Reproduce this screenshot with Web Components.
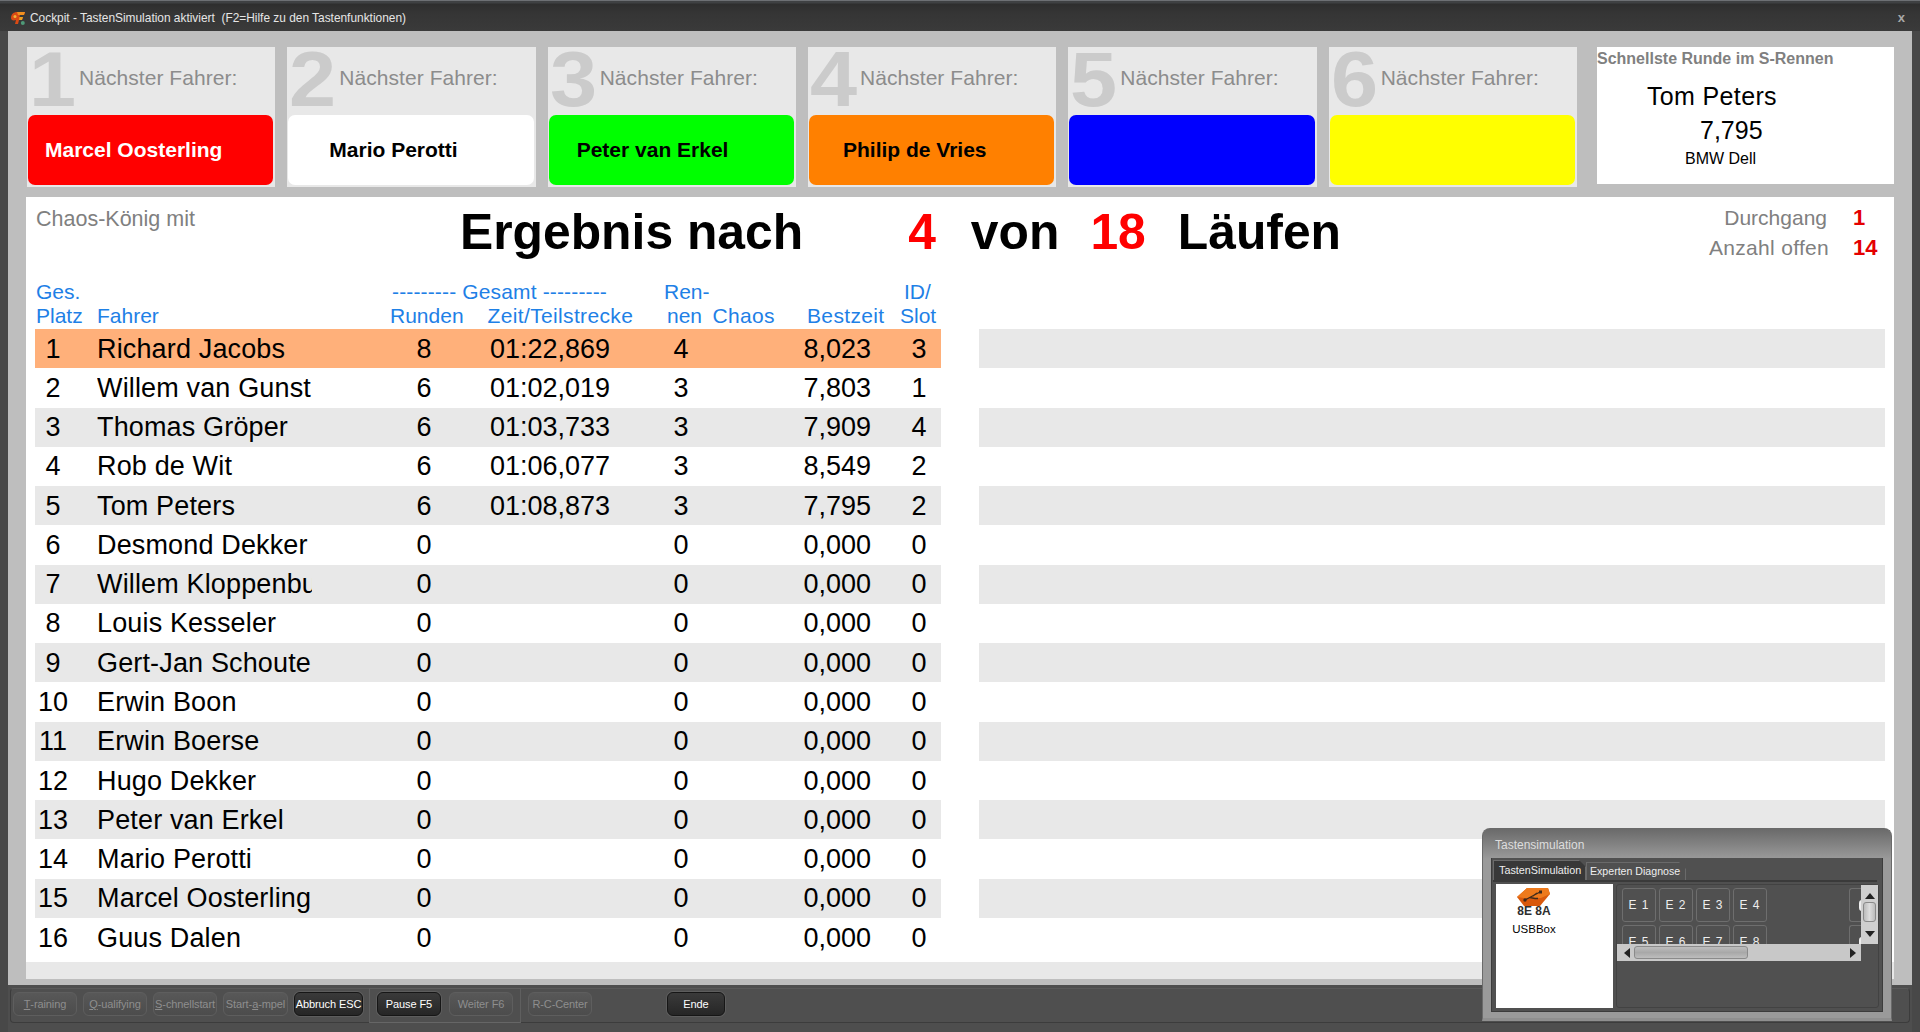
<!DOCTYPE html>
<html lang="de"><head><meta charset="utf-8"><title>Cockpit</title>
<style>
html,body{margin:0;height:100%;overflow:hidden;background:#3c3c3c;font-family:"Liberation Sans",Arial,sans-serif}
</style></head><body>
<app-window></app-window>
<script>
const el=(name,css,html)=>{customElements.define(name,class extends HTMLElement{
  connectedCallback(){ if(this.shadowRoot)return; const s=this.attachShadow({mode:'open'});
    const a=n=>this.getAttribute(n)||''; s.innerHTML='<style>'+css+'</style>'+html(a,this);}
});};

el('title-bar',`:host{display:flex;align-items:center;height:31px;box-sizing:border-box;flex:none;padding:3px 14px 0 10px;
  background:linear-gradient(#3f4143 0,#3f4143 2px,#2e2e2e 3px,#353535 12px,#3a3a3a 100%);border-top:1px solid #6d7074;color:#e6e6e6;font-size:11.9px}
 svg{width:16px;height:16px;margin-right:4px;flex:none}
 span{flex:1;white-space:pre}
 b{font-weight:700;color:#a8a8a8;font-size:13px;margin-right:1px}`,
 ()=>`<svg viewBox="0 0 16 16"><path d="M1 8C1 4 4 2 7 2H15L14 5H10L9.5 7H13L12 10H9L8 14H5L6 10C3 11 1 10 1 8Z" fill="#d94a14"/><path d="M7 2H15L14 5H8Z" fill="#ef8f1f"/><circle cx="5" cy="6.5" r="1.5" fill="#f2b33a"/><path d="M9.5 7H13L12 10H9Z" fill="#e9a020"/><circle cx="12.8" cy="13" r="2" fill="#4e9a78"/></svg><span>Cockpit - TastenSimulation aktiviert  (F2=Hilfe zu den Tastenfunktionen)</span><b>x</b>`);

el('driver-card',`:host{display:flex;flex-direction:column;flex:1 1 0;min-width:0;background:#e8e8e8;padding:0 2px 2px 1px;box-sizing:border-box}
 .top{display:flex;align-items:center;height:68px;flex:none}
 .n{width:49px;flex:none;margin-left:1px;font:700 77px/68px "Liberation Sans",sans-serif;color:#cbcbcb;white-space:nowrap;position:relative;top:-2px;transform:scaleX(1.1);transform-origin:0 50%}
 .l{font-size:21px;color:#8c8c8c;white-space:nowrap;margin-left:1px;position:relative;top:-3px;letter-spacing:.05px}
 .name{flex:1;border-radius:7px;background:var(--c,#fff);color:var(--t,#000);font:700 21px/1 "Liberation Sans",sans-serif;display:flex;align-items:center;white-space:nowrap;padding-bottom:2px;box-sizing:border-box}`,
 (a)=>`<div class="top"><span class="n">${a('num')}</span><span class="l">Nächster Fahrer:</span></div>
 <div class="name" style="--c:${a('bg')};--t:${a('fg')||'#000'};padding-left:${a('pad')||0}px"><slot></slot></div>`);

el('best-lap',`:host{display:flex;flex-direction:column;width:297px;flex:none;background:#fff;height:137px;margin:0 0 0 8px;box-sizing:border-box;color:#000}
 .h{font:700 16px/20px "Liberation Sans",sans-serif;color:#808080;margin-top:2px;white-space:nowrap}
 .a{font-size:25px;line-height:30px;margin:12px 0 0 50px;letter-spacing:.35px}
 .b{font-size:25px;line-height:30px;margin:4px 0 0 103px}
 .c{font-size:16px;line-height:20px;margin:4px 0 0 88px}`,
 ()=>`<div class="h">Schnellste Runde im S-Rennen</div><div class="a">Tom Peters</div><div class="b">7,795</div><div class="c">BMW Dell</div>`);

el('result-head',`:host{display:flex;height:83px;flex:none;box-sizing:border-box;white-space:nowrap}
 .chaos{width:434px;flex:none;box-sizing:border-box;padding:9px 0 0 10px;font-size:21.5px;line-height:26px;color:#808080}
 .t{display:flex;flex:none;height:72px;align-items:center;font:700 49.8px/1 "Liberation Sans",sans-serif;color:#000}
 .t .r{color:#f00}
 .info{margin-left:auto;display:grid;grid-template-columns:auto 24px 26px;grid-auto-rows:30px;padding:6px 15px 0 0;font-size:21px;color:#808080;height:60px;align-items:center;text-align:right}
 .info b{grid-column:3;color:#e40000;font-size:22px;text-align:left;font-weight:700}
 .info span.d{margin-right:2px}.info span.o{letter-spacing:.3px}`,
 ()=>`<div class="chaos">Chaos-König mit</div>
 <div class="t"><span>Ergebnis nach</span><span class="r" style="margin-left:105px">4</span><span style="margin-left:35px">von</span><span class="r" style="margin-left:31px">18</span><span style="margin-left:32px">Läufen</span></div>
 <div class="info"><span class="d">Durchgang</span><b>1</b><span class="o">Anzahl offen</span><b>14</b></div>`);

el('table-head',`:host{display:grid;grid-template-columns:61px 293px 274px 48.5px 94.5px 93px 1fr;grid-template-rows:24px 24px;padding-left:1px;height:49px;box-sizing:border-box;font-size:21px;line-height:24px;color:#1e80e6;white-space:nowrap;flex:none}
 div{display:flex;flex-direction:column}
 .s{margin-left:2px;letter-spacing:.15px}.x{display:flex;flex-direction:row;gap:24px}
 .i{padding-left:3px}.w{letter-spacing:.35px}`,
 ()=>`<div style="grid-row:1/3"><span>Ges.</span><span>Platz</span></div>
 <div style="grid-row:1/3"><span>&nbsp;</span><span>Fahrer</span></div>
 <div style="grid-row:1/3"><span class="s">--------- Gesamt ---------</span><span class="x"><span>Runden</span><span class="w">Zeit/Teilstrecke</span></span></div>
 <div style="grid-row:1/3"><span>Ren-</span><span class="i">nen</span></div>
 <div style="grid-row:1/3"><span>&nbsp;</span><span class="w">Chaos</span></div>
 <div style="grid-row:1/3"><span>&nbsp;</span><span class="w">Bestzeit</span></div>
 <div style="grid-row:1/3"><span style="padding-left:4px">ID/</span><span>Slot</span></div>`);

el('result-row',`:host{display:grid;grid-template-columns:63px 214px 62px 100px 152px 110px 54px 81px 26px 44px;height:39.27px;align-items:center;font-size:27px;color:#000;white-space:nowrap;background:#fff}
 :host([shade]){background:#e8e8e8}:host([lead]){background:#ffb07a}
 span{text-align:center;line-height:31px;margin-top:1px}
 .p{padding-right:27px}
 .n{text-align:left;overflow:hidden;margin-left:-1px;width:215px;letter-spacing:.15px}.v{text-align:right}`,
 (a)=>`<span class="p">${a('p')}</span><span class="n">${a('n')}</span><i></i><span>${a('r')}</span><span>${a('z')}</span><span>${a('m')}</span><i></i><span class="v">${a('b')}</span><i></i><span>${a('i')}</span>`);

el('strip-row',`:host{display:block;height:39.27px;background:#fff}:host([shade]){background:#e8e8e8}`,()=>``);

const rows=[["1","Richard Jacobs","8","01:22,869","4","8,023","3"],["2","Willem van Gunst","6","01:02,019","3","7,803","1"],["3","Thomas Gröper","6","01:03,733","3","7,909","4"],["4","Rob de Wit","6","01:06,077","3","8,549","2"],["5","Tom Peters","6","01:08,873","3","7,795","2"],["6","Desmond Dekker","0","","0","0,000","0"],["7","Willem Kloppenburg","0","","0","0,000","0"],["8","Louis Kesseler","0","","0","0,000","0"],["9","Gert-Jan Schouten","0","","0","0,000","0"],["10","Erwin Boon","0","","0","0,000","0"],["11","Erwin Boerse","0","","0","0,000","0"],["12","Hugo Dekker","0","","0","0,000","0"],["13","Peter van Erkel","0","","0","0,000","0"],["14","Mario Perotti","0","","0","0,000","0"],["15","Marcel Oosterling","0","","0","0,000","0"],["16","Guus Dalen","0","","0","0,000","0"]];

el('result-table',`:host{display:flex;flex:1;align-items:flex-start;padding:0 9px 0 9px;gap:38px;min-height:0}
 .l{width:906px;flex:none;display:flex;flex-direction:column}
 .r{width:906px;flex:none;display:flex;flex-direction:column;margin-top:49px}`,
 ()=>`<div class="l"><table-head></table-head>${rows.map((r,i)=>`<result-row ${i==0?'lead':(i%2==0?'shade':'')} p="${r[0]}" n="${r[1]}" r="${r[2]}" z="${r[3]}" m="${r[4]}" b="${r[5]}" i="${r[6]}"></result-row>`).join('')}</div>
 <div class="r">${Array.from({length:15},(_,i)=>`<strip-row ${i%2==0?'shade':''}></strip-row>`).join('')}</div>`);

el('result-board',`:host{display:flex;flex-direction:column;height:782px;flex:none;background:#fff;margin-top:10px;position:relative}
 .body{flex:1;display:flex;flex-direction:column;min-height:0}
 .foot{height:17px;flex:none;background:#e8e8e8}`,
 ()=>`<div class="body"><result-head></result-head><result-table></result-table></div><div class="foot"></div>`);

el('tool-btn',`:host{display:flex;flex:none;height:24px;width:var(--w,64px);box-sizing:border-box;align-items:center;justify-content:center;border-radius:6px;font-size:11px;white-space:nowrap;
   background:linear-gradient(#585858,#4c4c4c);border:1px solid #5e5e5e;color:#8e8e8e;letter-spacing:-.1px}
 :host([on]){background:linear-gradient(#3a3a3a,#262626);border:1px solid #161616;box-shadow:0 0 0 1px #5d5d5d;color:#fff}`,
 ()=>`<slot></slot>`);

el('button-bar',`:host{display:flex;flex:none;height:47px;background:#4e4e4e;box-sizing:border-box;padding:3px 2px 9px 2px}
 .p{flex:1;display:flex;align-items:center;border:1px solid #3c3c3c;border-top-color:#5a5a5a;border-radius:4px;padding:0 0 3px 2px;position:relative;background:#4f4f4f;box-sizing:border-box;gap:6px}
 .g{display:flex;align-items:center;gap:8px;border:1px solid #5f5f5f;border-bottom-color:#666;height:35px;padding:0 7px 3px;box-sizing:border-box;margin-bottom:-3px}`,
 ()=>`<div class="p">
 <tool-btn><u>T</u>-raining</tool-btn><tool-btn><u>Q</u>-ualifying</tool-btn><tool-btn><u>S</u>-chnellstart</tool-btn><tool-btn style="--w:65px">Start-<u>a</u>-mpel</tool-btn><tool-btn on style="--w:69px">Abbruch ESC</tool-btn>
 <div class="g"><tool-btn on>Pause F5</tool-btn><tool-btn>Weiter F6</tool-btn></div>
 <tool-btn style="margin-left:1px">R-C-Center</tool-btn><tool-btn on style="--w:58px;margin-left:69px">Ende</tool-btn></div>`);

el('key-btn',`:host{display:flex;width:34px;height:34px;box-sizing:border-box;align-items:center;justify-content:center;border:1px solid #6e6e6e;border-radius:3px;background:#505050;color:#eee;font-size:12px;letter-spacing:1px;flex:none}`,()=>`<slot></slot>`);

el('sim-panel',`:host{position:absolute;left:1482px;top:828px;width:410px;height:193px;box-sizing:border-box;display:flex;flex-direction:column;border-radius:8px 8px 0 0;background:linear-gradient(#6a6a6a,#9a9a9a 30px,#9a9a9a);border:1px solid #6a6a6a;border-bottom:3px solid #8f8f8f;overflow:hidden}
 .t{height:29px;flex:none;padding:1px 0 0 12px;font-size:12px;line-height:30px;color:#ddd;box-sizing:border-box}
 .in{margin:0 8px 0 8px;flex:none;height:154px;background:#505050;border:1px solid #3c3c3c;border-top:none;box-sizing:border-box;display:flex;flex-direction:column;padding:2px 1px 0}
 .tabs{display:flex;height:20px;flex:none;align-items:flex-end;border-bottom:2px solid #3a3a3a;margin-right:4px;box-sizing:content-box}
 .tab{color:#eee;white-space:nowrap;height:18px;line-height:17px;padding:0 0 0 5px;border:1px solid #6a6a6a;border-bottom:none;background:#505050;clip-path:polygon(0 0,calc(100% - 7px) 0,100% 7px,100% 100%,0 100%);box-sizing:border-box}
 .tab.a{height:20px;line-height:18px;background:#383838;width:93px;font-size:10.8px}
 .tab.b{width:100px;font-size:10.6px;padding-left:3px}
 .c{flex:1;display:flex;gap:3px;padding:2px 2px 3px 3px;min-height:0}
 .list{width:117px;background:#fff;flex:none;display:flex;flex-direction:column;align-items:center;color:#000;font-size:11.5px;padding:3px 41px 0 0;box-sizing:border-box;position:relative;white-space:nowrap}
 .list svg{width:34px;height:20px;display:block;flex:none}
 .list b{font:700 12px/11px "Liberation Sans",sans-serif;color:#2e2e2e;margin-top:-1px;transform:scaleY(1.1)}
 .list span{line-height:14px;margin-top:5px}
 .pane{flex:1;display:grid;grid-template-columns:1fr 17px;grid-template-rows:59px 17px 1fr;border:1px solid #424242;border-radius:3px;min-width:0}
 .keys{overflow:hidden;display:flex;flex-wrap:wrap;align-content:flex-start;gap:3px;padding:3px 0 0 5px;position:relative;box-sizing:border-box;min-width:0}
 .row{display:flex;gap:3px;width:100%}
 .row i{flex:none;width:12px;height:34px;border:1px solid #6e6e6e;border-right:none;border-radius:3px 0 0 3px;margin-left:auto;box-sizing:border-box;position:relative;display:block}
 .row i::after{content:"";position:absolute;right:-1px;top:11px;width:3px;height:11px;background:#eee;border-radius:3px 0 0 3px}
 .sv{background:#cfcfcf;position:relative;display:flex;flex-direction:column;align-items:center;justify-content:space-between;padding:8px 0 7px;box-sizing:border-box}
 .sv .th{position:absolute;left:2px;right:2px;top:17px;height:20px;border:1px solid #8a8a8a;border-radius:3px;background:linear-gradient(90deg,#bbb,#ddd,#bbb);box-sizing:border-box}
 .sh{background:#c8c8c8;position:relative;display:flex;align-items:center;justify-content:space-between;padding:0 5px 0 7px;box-sizing:border-box}
 .sh .th{position:absolute;left:17px;top:2px;bottom:2px;width:114px;border:1px solid #8a8a8a;border-radius:3px;background:linear-gradient(#bdbdbd,#a8a8a8 50%,#bdbdbd);box-sizing:border-box}
 .tr{width:0;height:0;border:5px solid transparent;display:block}
 .up{border-bottom:6px solid #222;border-top:0}.dn{border-top:6px solid #222;border-bottom:0}
 .lf{border-right:6px solid #222;border-left:0}.rt{border-left:6px solid #222;border-right:0}`,
 ()=>`<div class="t">Tastensimulation</div><div class="in"><div class="tabs"><div class="tab a">TastenSimulation</div><div class="tab b">Experten Diagnose</div></div>
 <div class="c"><div class="list"><svg viewBox="0 0 34 20"><path d="M10 1H31L33 7L23 19H7L0 10Z" fill="#d9590c"/><path d="M10 1H31L33 7L24 11H7L0 10Z" fill="#ee7a1c"/><path d="M8 13L23 5M13 10.5L18 11.5H21M16 9L20 6" stroke="#3e2a1c" stroke-width="1.3" fill="none"/><circle cx="8" cy="13" r="1.7" fill="#3e2a1c"/><rect x="22" y="3.5" width="3" height="3" fill="#3e2a1c"/></svg><b>8E 8A</b><span>USBBox</span></div>
 <div class="pane"><div class="keys"><div class="row"><key-btn>E 1</key-btn><key-btn>E 2</key-btn><key-btn>E 3</key-btn><key-btn>E 4</key-btn><i></i></div><div class="row"><key-btn>E 5</key-btn><key-btn>E 6</key-btn><key-btn>E 7</key-btn><key-btn>E 8</key-btn><i></i></div></div>
 <div class="sv"><span class="tr up"></span><span class="th"></span><span class="tr dn"></span></div>
 <div class="sh"><span class="tr lf"></span><span class="th"></span><span class="tr rt"></span></div><div></div></div></div></div>`);

el('app-window',`:host{display:flex;flex-direction:column;width:1920px;height:1032px;position:relative;background:#484848;overflow:hidden}
 .body{flex:1;display:flex;flex-direction:column;min-height:0;margin:0 8px}
 .work{flex:none;height:954px;background:#bebebe;padding:16px 18px 0 18px;box-sizing:border-box;display:flex;flex-direction:column}
 .cards{display:flex;gap:12px;height:140px;flex:none;padding-left:1px;align-items:flex-start}
 .cw{display:flex;gap:12px;flex:1;height:140px;min-width:0}`,
 ()=>`<title-bar></title-bar><div class="body"><div class="work">
 <div class="cards"><div class="cw">
 <driver-card num="1" bg="#ff0000" fg="#fff" pad="17">Marcel Oosterling</driver-card>
 <driver-card num="2" bg="#ffffff" pad="41">Mario Perotti</driver-card>
 <driver-card num="3" bg="#00ff00" pad="28">Peter van Erkel</driver-card>
 <driver-card num="4" bg="#ff8000" pad="34">Philip de Vries</driver-card>
 <driver-card num="5" bg="#0000ff"></driver-card>
 <driver-card num="6" bg="#ffff00"></driver-card></div>
 <best-lap></best-lap></div>
 <result-board></result-board></div><button-bar></button-bar></div><sim-panel></sim-panel>`);
</script></body></html>
